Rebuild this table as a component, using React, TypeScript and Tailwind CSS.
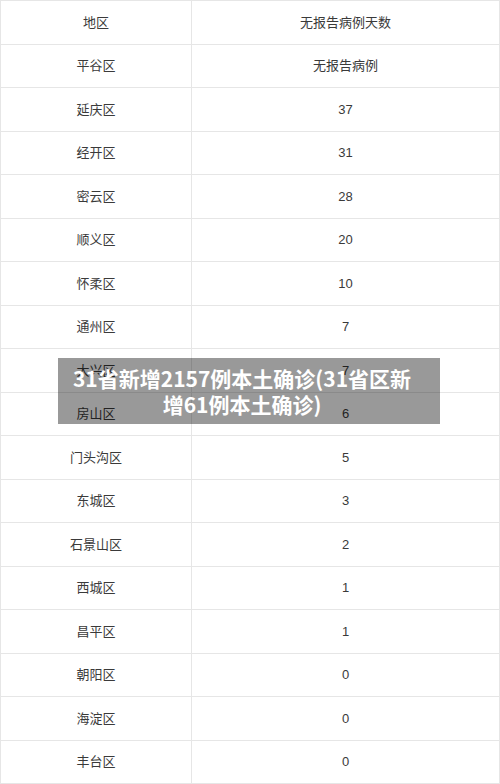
const rows: [string, string][] = [
  ["平谷区", "无报告病例"],
  ["延庆区", "37"],
  ["经开区", "31"],
  ["密云区", "28"],
  ["顺义区", "20"],
  ["怀柔区", "10"],
  ["通州区", "7"],
  ["大兴区", "7"],
  ["房山区", "6"],
  ["门头沟区", "5"],
  ["东城区", "3"],
  ["石景山区", "2"],
  ["西城区", "1"],
  ["昌平区", "1"],
  ["朝阳区", "0"],
  ["海淀区", "0"],
  ["丰台区", "0"],
];

const Row = ({ area, value }: { area: string; value: string }) => (
  <div className="flex h-[43.5px] border-b border-[#e6e6e6]">
    <div className="flex w-[191px] items-center justify-center border-r border-[#e6e6e6]">
      {area}
    </div>
    <div className="flex flex-1 items-center justify-center">{value}</div>
  </div>
);

export default function App() {
  return (
    <div className="relative h-[784px] w-[500px] overflow-hidden bg-white">
      <div className="border-x border-t border-[#e6e6e6] font-['Liberation_Sans','Noto_Sans_CJK_SC',sans-serif] text-[13px] text-[#3a3a3a]">
        <Row area="地区" value="无报告病例天数" />
        {rows.map(([a, v]) => (
          <Row key={a} area={a} value={v} />
        ))}
      </div>

      <div className="absolute left-[58px] top-[358px] flex h-[66px] w-[382px] items-center justify-center bg-black/40 pl-1 pr-[18px]">
        <p className="text-center font-['Noto_Sans_CJK_SC',sans-serif] text-[21px] font-bold leading-[26px] text-white">
          31省新增2157例本土确诊(31省区新
          <br />
          增61例本土确诊)
        </p>
      </div>
    </div>
  );
}
